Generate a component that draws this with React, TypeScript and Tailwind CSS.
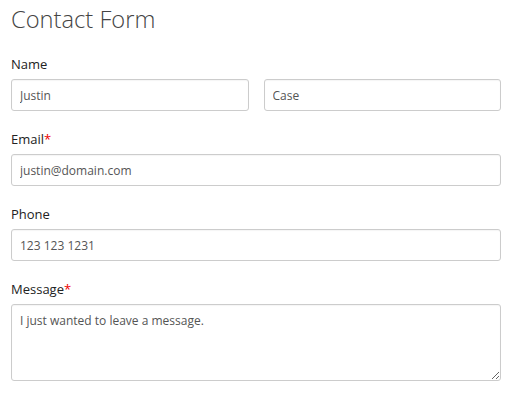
import React from "react";

const inputCls =
  "block w-full h-[32px] rounded-[3px] border border-[#cccccc] bg-white px-[8px] text-[12px] text-[#555555] outline-none shadow-[inset_0_1px_1px_rgba(0,0,0,0.04)]";

function Label({ text, required }: { text: string; required?: boolean }) {
  return (
    <label className="block text-[13px] leading-[20px] text-[#222222] mb-[5px]">
      {text}
      {required && <span className="text-[#ee0000]">*</span>}
    </label>
  );
}

export default function App() {
  return (
    <div
      className="w-[524px] h-[401px] bg-white pl-[11px] pt-[3px]"
      style={{ fontFamily: '"Open Sans", sans-serif' }}
    >
      <div className="w-[490px]">
        <h1 className="text-[23.7px] leading-[33px] font-light text-[#444444] mb-[18px]">
          Contact Form
        </h1>
        <div className="mb-[18px]">
          <Label text="Name" />
          <div className="grid grid-cols-2 gap-[15px]">
            <input className={inputCls} defaultValue="Justin" />
            <input className={inputCls} defaultValue="Case" />
          </div>
        </div>
        <div className="mb-[18px]">
          <Label text="Email" required />
          <input className={inputCls} defaultValue="justin@domain.com" />
        </div>
        <div className="mb-[18px]">
          <Label text="Phone" />
          <input className={inputCls} defaultValue="123 123 1231" />
        </div>
        <div>
          <Label text="Message" required />
          <textarea
            className="block w-full h-[77px] rounded-[3px] border border-[#cccccc] bg-white px-[8px] py-[7px] text-[12px] leading-[18px] text-[#555555] outline-none shadow-[inset_0_1px_1px_rgba(0,0,0,0.04)]"
            defaultValue="I just wanted to leave a message."
          />
        </div>
      </div>
    </div>
  );
}
